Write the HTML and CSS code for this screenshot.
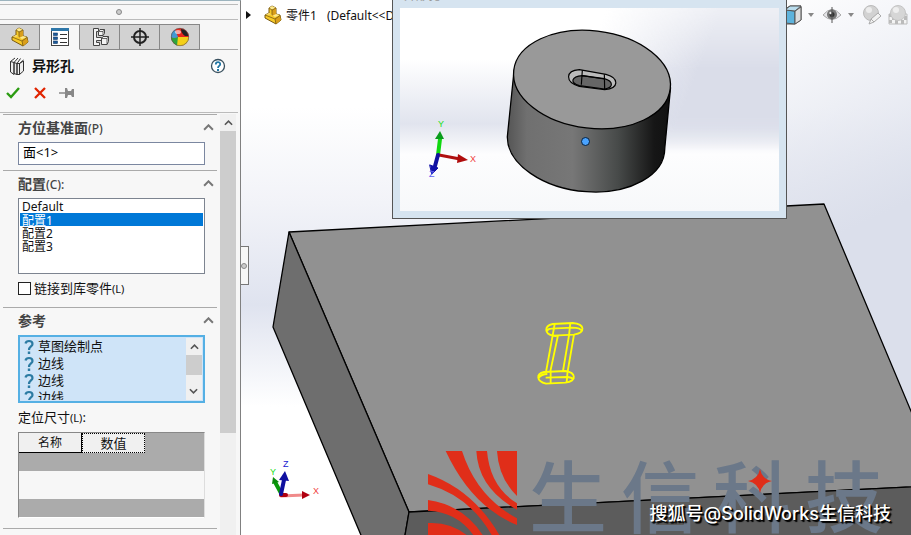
FILE: index.html
```html
<!DOCTYPE html>
<html lang="zh-CN">
<head>
<meta charset="utf-8">
<title>异形孔</title>
<link rel="stylesheet" href="styles.css">
</head>
<body>
<svg class="defs" aria-hidden="true">
  <symbol id="part" viewBox="0 0 20 20">
    <path d="M2 10 6 8 6 3 9 1 13 3 13 9 17 10 18 15 13 19 2 13Z" fill="#f6c928" stroke="#7a5a12" stroke-linejoin="round"/>
    <path d="M6 3 9 5 13 3 9 1ZM2 10 6 8 12 12 17 10 13 9 9 9" fill="#fde98c"/>
    <path d="M9 5 13 3V9L9 11ZM12 13 17 11 18 15 13 19Z" fill="#d99e1a"/>
    <path d="M6 3 9 5V10M9 5 13 3M2 10 12 14 17 10.500M12 14 13 19" fill="none" stroke="#7a5a12" stroke-width=".8"/>
  </symbol>
  <symbol id="chevron" viewBox="0 0 10 6"><path d="M1 5 5 1 9 5" fill="none" stroke="currentColor" stroke-width="1.800"/></symbol>
  <symbol id="query" viewBox="0 0 10 16"><path d="M1.500 4.500C2 2.500 3.500 2 5 2 7 2 8.500 3 8.500 5 8.500 7.500 5 7.500 5 11" fill="none" stroke="#2c7ba3" stroke-width="2.200"/><rect x="3.800" y="12.500" width="2.400" height="2.500" fill="#2c7ba3"/></symbol>
</svg>
<div class="app">
  <aside class="panel">
    <div class="grip"><span class="dot"></span></div>
    <nav class="tabs" aria-label="管理器">
      <button class="tab" aria-label="特征"><svg width="20" height="20"><use href="#part"/></svg></button>
      <button class="tab active" aria-label="属性"><svg width="20" height="20" viewBox="0 0 20 20"><rect x="1.500" y="1.500" width="17" height="17" fill="#fff" stroke="#444"/><rect x="1" y="1" width="18" height="3" fill="#2d76a8"/><g fill="#1d5b9c" stroke="#123a66" stroke-width=".6"><rect x="3.500" y="6" width="4" height="2.500"/><rect x="3.500" y="10" width="4" height="2.500"/><rect x="3.500" y="14" width="4" height="2.500"/></g><path d="M10 7.500H17M10 11.500H17M10 15.500H17" stroke="#333"/></svg></button>
      <button class="tab" aria-label="配置"><svg width="20" height="20" viewBox="0 0 20 20" fill="#f2f2f2" stroke="#444"><path d="M3.500 1.500H8.500V4.500H6.500V10.500H11.500V13.500H6.500V15.500H9.500V18.500H3.500Z"/><path d="M8.500 4.500 10 2.500H14.500V6.500L13 8.500H8.500ZM11.500 11.500 13 9.500H18.500V14.500L17 17.500H11.500Z"/><path d="M8.500 4.500H13V8.500M13 4.500 14.500 2.500M11.500 11.500H17V17.500M17 11.500 18.500 9.500" fill="none" stroke-width=".8"/></svg></button>
      <button class="tab" aria-label="尺寸"><svg width="20" height="20" viewBox="0 0 20 20" fill="none" stroke="#222" stroke-width="2"><circle cx="10" cy="10" r="6"/><path d="M10 1V19M1 10H19" stroke-width="1.500"/></svg></button>
      <button class="tab" aria-label="外观"><svg width="20" height="20" viewBox="0 0 20 20"><circle cx="10" cy="10" r="9" fill="#e8261c"/><path d="M1 10C3 11 6 11 8 10L10 19A9 9 0 0 1 1 10" fill="#2fa43b"/><path d="M8 10 16 10 19 10A9 9 0 0 1 7 18.500Z" fill="#f4cf18"/><path d="M1 10A9 9 0 0 1 5 2.500L8 10Q4 12 1 10" fill="#4299d2"/><path d="M11 2Q17 2 18.500 9L15 9Q11 6 11 2" fill="#222"/><ellipse cx="8" cy="5" rx="3" ry="2" fill="#fff" opacity=".6"/><circle cx="10" cy="10" r="8.700" fill="none" stroke="#555" stroke-width=".6"/></svg></button>
    </nav>
    <header class="title">
      <svg width="16" height="20" viewBox="0 0 16 20" fill="#eee" stroke="#333"><path d="M1.500 5.500 5 6.500V18.500L1.500 16ZM5 6.500 8 7.500V18.500L5 17.500ZM8 7.500 10.500 7.500V18.500H8ZM10.500 7.500 14.500 5V15L10.500 18.500Z"/><path d="M1.500 5.500 6 2M5 6.500 9 2M8 7.500 11.500 2.500M10.500 7.500 14.500 4" fill="none"/></svg>
      <h1>异形孔</h1>
      <button class="help" aria-label="帮助"><svg width="16" height="16" viewBox="0 0 16 16"><circle cx="8" cy="8" r="6.500" fill="#fff" stroke="#39505e" stroke-width="1.300"/><path d="M5.800 6.500C5.800 3.300 10.300 3.500 10.200 6.200 10.200 8 8 7.800 8 10" fill="none" stroke="#2277a5" stroke-width="1.800"/><rect x="7" y="11" width="2" height="2" fill="#2277a5"/></svg></button>
    </header>
    <div class="actions">
      <button aria-label="确定"><svg width="16" height="14" viewBox="0 0 16 14"><path d="M2 7 6 11 14 2" fill="none" stroke="#2c9c12" stroke-width="2.400"/></svg></button>
      <button aria-label="取消"><svg width="14" height="14" viewBox="0 0 14 14"><path d="M2 2 12 12M12 2 2 12" stroke="#e02400" stroke-width="2.300"/></svg></button>
      <button aria-label="固定"><svg width="16" height="14" viewBox="0 0 16 14"><path d="M0 7H7" stroke="#888" stroke-width="1.500"/><path d="M6 2H8L9 5H12L13 3H15V11H13L12 9H9L8 12H6Z" fill="#888"/></svg></button>
    </div>
    <div class="body">
      <div class="groups">
        <section>
          <h2><label for="face">方位基准面<small>(P)</small></label><svg width="11" height="7"><use href="#chevron"/></svg></h2>
          <input id="face" class="face" type="text" value="面&lt;1&gt;">
        </section>
        <section>
          <h2><label for="config">配置<small>(C):</small></label><svg width="11" height="7"><use href="#chevron"/></svg></h2>
          <select id="config" class="config" size="5">
            <option>Default</option><option selected>配置1</option><option>配置2</option><option>配置3</option>
          </select>
          <label class="check"><input type="checkbox"><span>链接到库零件<small>(L)</small></span></label>
        </section>
        <section>
          <h2><span>参考</span><svg width="11" height="7"><use href="#chevron"/></svg></h2>
          <div class="refs">
            <ul>
              <li><svg width="10" height="16"><use href="#query"/></svg>草图绘制点</li>
              <li><svg width="10" height="16"><use href="#query"/></svg>边线</li>
              <li><svg width="10" height="16"><use href="#query"/></svg>边线</li>
              <li><svg width="10" height="16"><use href="#query"/></svg>边线</li>
            </ul>
            <div class="scroll"><button aria-label="向上"><svg width="9" height="6"><use href="#chevron"/></svg></button><i class="thumb short"></i><button class="down" aria-label="向下"><svg width="9" height="6"><use href="#chevron"/></svg></button></div>
          </div>
          <p class="caption" id="dims">定位尺寸<small>(L)</small>:</p>
          <table class="dims" aria-labelledby="dims">
            <thead><tr><th class="name">名称</th><th class="value">数值</th><td></td></tr></thead>
            <tbody><tr class="gap"><td colspan="3"></td></tr><tr class="blank"><td colspan="3"></td></tr><tr class="gap"><td colspan="3"></td></tr></tbody>
          </table>
        </section>
        <section></section>
      </div>
      <div class="scroll main"><button aria-label="向上"><svg width="9" height="6"><use href="#chevron"/></svg></button><i class="thumb long"></i></div>
    </div>
  </aside>
  <main class="view">
    <svg class="scene" viewBox="241 0 670 535" preserveAspectRatio="xMinYMin slice">
      <defs>
        <linearGradient id="sky" x1="0" y1="0" x2="0" y2="1"><stop offset=".2" stop-color="#fff"/><stop offset=".38" stop-color="#f2f3f8"/><stop offset=".57" stop-color="#dfe3ef"/><stop offset=".76" stop-color="#fff"/></linearGradient>
        <linearGradient id="haze" gradientUnits="userSpaceOnUse" x1="740" y1="0" x2="850" y2="230"><stop offset="0" stop-color="#e0e3ee" stop-opacity="0"/><stop offset="1" stop-color="#dbdfeb"/></linearGradient>
      </defs>
      <rect x="241" width="670" height="535" fill="url(#sky)"/>
      <rect x="600" width="311" height="535" fill="url(#haze)"/>
      <g stroke="#000" stroke-width="1.300" stroke-linejoin="round">
        <path d="M289 232 824 204 950 504 950 485 409 512Z" fill="#919191"/>
        <path d="M289 232 273 327 366 547 403 547 409 512Z" fill="#6e6e6e"/>
        <path d="M409 512 950 485V547H403Z" fill="#5c5c5c"/>
      </g>
      <g transform="translate(500 300) scale(.33333)" fill="none" stroke="#ff0" stroke-width="5.500">
        <path d="M158 72 218 69C255 72 258 98 222 104L160 107C132 102 132 78 158 72ZM154 86 216 83C236 83 244 88 246 94M154 86Q143 86 141 94"/>
        <path d="M132 216 196 213C228 218 232 242 196 248L138 251C108 243 108 222 132 216ZM116 234Q124 222 142 222M137 233 203 231Q219 234 222 238"/>
        <path d="M164 72 158 106 138 216M174 106 151 214M211 70 207 106 189 213M222 104 203 214M152 212V250M203 212 200 247M158 106 170 109"/>
      </g>
      <g transform="translate(260 440) scale(.33333)" fill="#e02e19">
        <path d="M711 33H771V168Q716 115 711 33ZM649 33H681Q690 140 771 190V209Q655 145 649 33ZM557 33H606Q650 170 771 235V255Q635 200 557 33ZM504 102Q640 150 718 285H695Q630 170 504 133ZM504 180Q610 195 668 285H640Q590 215 504 212ZM504 249Q570 245 620 285H504Z"/>
      </g>
      <g stroke-linecap="round">
        <path d="M282 495 275 482" stroke="#0a9a0a" stroke-width="4"/><path d="M272 484 273 477 279 482Z" fill="#0b8a0b"/>
        <path d="M281 496 304 495" stroke="#f08a8a" stroke-width="3"/><path d="M302 491 310 495 302 499Z" fill="#b00010"/><path d="M281 495H286" stroke="#b00010" stroke-width="4"/>
        <path d="M281 494 284 480" stroke="#1010a0" stroke-width="4"/><path d="M279 480 285 471 289 481Z" fill="#1010a0"/>
      </g>
      <g class="axis"><text x="270" y="475" fill="#20e020">Y</text><text x="283" y="467" fill="#2020d0">Z</text><text x="313" y="494" fill="#f04040">X</text></g>
    </svg>
    <div class="topbar">
      <div class="tree"><svg width="5" height="10" viewBox="0 0 5 10"><path d="M0 1 5 5 0 9Z" fill="#111"/></svg><svg width="20" height="20"><use href="#part"/></svg><span>零件1</span><span>(Default&lt;&lt;D</span></div>
      <div class="tools">
        <svg width="18" height="20" viewBox="0 0 18 20" stroke="#555" stroke-linejoin="round"><path d="M1 4 6 1H17V15L11 19H1Z" fill="#fff"/><path d="M1 5 11 6V19L1 18Z" fill="#5eb3dc"/><path d="M11 6 17 2V15L11 19Z" fill="#ddd"/><path d="M1 5 6 1H17L11 6Z" fill="#b9dced"/></svg>
        <svg class="caret" width="6" height="4"><path d="M0 0H6L3 4Z" fill="#888"/></svg>
        <svg width="20" height="16" viewBox="0 0 20 16"><path d="M1 8Q10-3 19 8 10 17 1 8Z" fill="#e5e5e8" stroke="#aaa"/><circle cx="10" cy="7.500" r="5" fill="#777"/><circle cx="10" cy="7.500" r="2.500" fill="#333"/><circle cx="8.500" cy="6" r="1.200" fill="#eee"/><path d="M10 0V16" stroke="#555"/></svg>
        <svg class="caret" width="6" height="4"><path d="M0 0H6L3 4Z" fill="#888"/></svg>
        <svg width="20" height="20" viewBox="0 0 20 20"><circle cx="9" cy="8" r="7.500" fill="#d2d2d2" stroke="#bbb"/><circle cx="7" cy="5" r="3" fill="#ececec"/><path d="M7 19 9 14 16 8 19 11 12 17Z" fill="#f2f2f2" stroke="#aaa"/><path d="M9 14 12 17" stroke="#aaa"/></svg>
        <svg width="20" height="20" viewBox="0 0 20 20"><path d="M1 9H19V19H1Z" fill="#f4f4f4" stroke="#bbb"/><path d="M1 9H4V12H1ZM4 12H7V15H4ZM1 15H4V18H1ZM7 15H10V19H7ZM10 12H13V15H10ZM13 15H16V19H13ZM16 11H19V15H16Z" fill="#bbb"/><circle cx="10" cy="8" r="7.500" fill="#d6d6d6" stroke="#c4c4c4"/><circle cx="8" cy="5" r="3" fill="#eee"/></svg>
      </div>
    </div>
    <div class="preview">
      <span class="preview-title">异形孔.SLDLFP</span>
      <svg viewBox="400 8 379 203" preserveAspectRatio="xMidYMid slice">
        <defs>
          <linearGradient id="pbg" x1="0" y1="0" x2="0" y2="1"><stop offset=".25" stop-color="#fff"/><stop offset=".57" stop-color="#e1e4ee"/><stop offset=".72" stop-color="#fdfdfe"/><stop offset="1" stop-color="#f7f8fa"/></linearGradient>
          <linearGradient id="pdark" gradientUnits="userSpaceOnUse" x1="610" y1="0" x2="710" y2="40"><stop offset="0" stop-color="#dadde9" stop-opacity="0"/><stop offset="1" stop-color="#dadde9"/></linearGradient>
          <linearGradient id="pfade" x1="0" y1="0" x2="0" y2="1"><stop offset="0" stop-color="#777"/><stop offset=".3" stop-color="#fff"/><stop offset=".54" stop-color="#fff"/><stop offset=".7" stop-color="#000"/></linearGradient>
          <mask id="upper" maskUnits="userSpaceOnUse" x="400" y="8" width="379" height="203"><rect x="400" y="8" width="379" height="203" fill="url(#pfade)"/></mask>
          <linearGradient id="side"><stop offset="0" stop-color="#555"/><stop offset=".12" stop-color="#707070"/><stop offset=".4" stop-color="#777"/><stop offset=".68" stop-color="#474a49"/><stop offset=".9" stop-color="#161616"/><stop offset="1" stop-color="#111"/></linearGradient>
        </defs>
        <rect x="400" y="8" width="379" height="203" fill="url(#pbg)"/>
        <rect x="600" y="8" width="179" height="203" fill="url(#pdark)" mask="url(#upper)"/>
        <path d="M513.800 73 507.300 137A78.800 48.800 6.700 0 0 664.800 148L670.500 88Z" fill="url(#side)" stroke="#000" stroke-width="1.300"/>
        <ellipse cx="592" cy="79.500" rx="78.800" ry="48.800" transform="rotate(6.700 592 79.500)" fill="#999" stroke="#000" stroke-width="1.300"/>
        <g transform="translate(490 0) scale(.33333)" stroke="#000" stroke-width="3.500" stroke-linejoin="round">
          <path d="M268 209 348 223C388 234 388 265 344 269L268 259C224 246 226 212 268 209Z" fill="#bbb"/>
          <path d="M277 227 343 236C370 244 372 262 344 267L268 257C238 248 244 230 277 227Z" fill="#666"/>
          <path d="M277 211 274 254M343 223 344 267M277 227 343 237" fill="none"/>
        </g>
        <circle cx="585.500" cy="141.500" r="4" fill="#4aa3ff" stroke="#06203c"/>
        <g stroke-linecap="round">
          <path d="M438 155 440 139" stroke="#10d810" stroke-width="4"/><path d="M435 139 440 131 444 139Z" fill="#0a9c1c"/>
          <path d="M439 155 460 159" stroke="#b01010" stroke-width="3"/><path d="M458 154 468 160 457 163Z" fill="#b00d0d"/>
          <path d="M438 155 435 166" stroke="#1010a0" stroke-width="4"/><path d="M430 165 438 168 432 174Z" fill="#1010a8" stroke="#1010a8"/>
        </g>
        <g class="axis"><text x="438" y="127" fill="#20e020">Y</text><text x="429" y="177" fill="#6060f0">Z</text><text x="470" y="162" fill="#f04040">X</text></g>
      </svg>
    </div>
    <button class="edge-grip" aria-label="折叠面板"><span class="dot"></span></button>
    <div class="brand"><span>生</span><span>信</span><span>科</span><span>技</span><svg width="24" height="24" viewBox="-12 -12 24 24"><path d="M0-12Q2-2 12 0 2 2 0 12-2 2-12 0-2-2 0-12Z" fill="#e02e19"/></svg></div>
    <p class="credit">搜狐号@SolidWorks生信科技</p>
  </main>
</div>
</body>
</html>
```
FILE: styles.css
```css
* { box-sizing: border-box; }
body { margin: 0; overflow: hidden; font: 13px/17px "Noto Sans", "Noto Sans CJK SC", sans-serif; color: #111; }
button { margin: 0; padding: 0; border: 0; background: none; color: inherit; display: flex; align-items: center; justify-content: center; }
svg { display: block; flex: none; }
small { font-size: 11px; }
.defs { display: none; }
.app { display: grid; grid-template-columns: 241px 1fr; height: 100vh; }
.panel { display: flex; flex-direction: column; min-height: 0; background: #f7f7f7; border-right: 1px solid #808080; border-top: 1px solid #9db4be; }
.grip { height: 16px; margin: 3px 2px 4px 0; border-top: 1px solid #bbb; border-bottom: 1px solid #bbb; display: flex; align-items: center; justify-content: center; }
.dot { width: 6px; height: 6px; border-radius: 50%; border: 1px solid #888; background: #ccc; }
.tabs { display: flex; height: 26px; margin-right: 2px; border-bottom: 1px solid #aaa; }
.tab { width: 40px; height: 26px; background: #d2d2d2; border: 1px solid #888; border-left: 0; }
.tab.active { background: #f7f7f7; border-bottom-color: #f7f7f7; border-top-color: #aaa; }
.title { display: flex; align-items: center; gap: 7px; height: 32px; padding: 0 14px 0 9px; }
h1 { margin: 0; font-size: 14px; line-height: 20px; }
.help { margin-left: auto; }
.actions { display: flex; gap: 12px; height: 31px; padding: 0 5px 8px; align-items: center; margin-right: 2px; border-bottom: 1px solid #bbb; }
.body { display: flex; flex: 1; min-height: 0; padding-top: 1px; }
.groups { flex: 1; min-width: 0; padding: 0 3px; overflow: hidden; }
section { border-top: 1px solid #aaa; padding: 0 12px 5px 15px; }
section:nth-child(3) { padding-bottom: 10px; }
h2 { display: flex; align-items: center; justify-content: space-between; margin: 0 -9px 0 0; height: 27px; padding-bottom: 2px; font-size: 14px; color: #444; }
h2 small { font-size: 12px; font-weight: 500; }
h2 svg { color: #777; }
.face { display: block; width: 100%; height: 23px; padding: 0 4px 4px; border: 1px solid #7b87a0; background: #fff; font: inherit; }
.config { display: block; width: 100%; height: 76px; padding: 1px; border: 1px solid #7d8490; border-radius: 0; background: #fff; font: inherit; font-size: 12px; overflow: hidden; outline: 0; }
.config option { display: flex; align-items: center; height: 13px; min-height: 13px; padding: 0 2px; line-height: 13px; color: #111; }
.config option:checked { background: #0078d7 linear-gradient(#0078d7, #0078d7); color: #fff; }
.check { display: flex; align-items: center; gap: 3px; height: 28px; }
.check input { appearance: none; width: 13px; height: 13px; margin: 0; border: 1px solid #222; background: #fff; }
.refs { display: flex; height: 68px; padding: 1px; border: 2px solid #55b0e4; background: #cfe4f8; }
.refs ul { flex: 1; margin: 0; padding: 0 3px; list-style: none; overflow: hidden; }
.refs li { display: flex; align-items: center; gap: 4px; height: 17px; }
.scroll { display: flex; flex-direction: column; width: 16px; background: #f0f0f0; color: #555; }
.scroll button { height: 17px; }
.scroll .down { margin-top: auto; transform: rotate(180deg); }
.thumb { background: #cdcdcd; }
.short { height: 20px; }
.long { height: 302px; }
.main { margin-right: 4px; }
.caption { margin: 0; padding: 6px 0; }
.dims { width: 100%; table-layout: fixed; border-spacing: 0; border: 1px solid #888; border-right-color: #ddd; border-bottom-color: #fff; background: #ababab; }
.dims th, .dims td { padding: 0; font-weight: 400; height: 20px; }
.dims .name { width: 63px; background: #f0f0f0; border-right: 1px solid #000; border-bottom: 1px solid #000; font-size: 12px; }
.dims .value { width: 63px; background: #f0f0f0; border: 1px dotted #000; }
.dims .gap td { height: 18px; }
.dims .blank td { height: 28px; background: #f7f7f7; }
.view { position: relative; overflow: hidden; }
.scene { position: absolute; inset: 0; width: 100%; height: 100%; }
.axis { font: 9px "Liberation Sans", sans-serif; }
.topbar { position: relative; display: flex; justify-content: space-between; padding: 5px 3px 0 5px; }
.tree { display: flex; align-items: center; font-size: 12px; height: 20px; }
.tree svg + svg { margin: 0 3px 0 12px; }
.tree span + span { margin-left: 10px; }
.tools { display: flex; align-items: center; gap: 6px; height: 20px; }
.tools .caret { margin-right: 2px; }
.preview { position: absolute; left: 151px; right: 124px; top: 0; height: 219px; padding: 8px 7px 7px; border: 1px solid #555; border-top: 0; background: #d6e4f0; }
.preview > svg { width: 100%; height: 100%; }
.preview-title { position: absolute; left: 11px; top: -12px; font-size: 12px; line-height: 16px; color: #999; }
.edge-grip { position: absolute; left: -1px; top: 246px; width: 9px; height: 39px; border: 1px solid #777; border-left: 0; background: #f7f7f7; }
.brand { position: absolute; right: 28px; bottom: 0; display: flex; gap: 14px; font-size: 78px; line-height: 76px; font-weight: 500; color: #6b7889; }
.brand svg { position: absolute; right: 111px; top: 10px; }
.credit { position: absolute; right: 20px; bottom: 9px; margin: 0; font: 500 18px/24px Inter, "Noto Sans CJK SC", sans-serif; color: #fff; text-shadow: 1px 1px 1px #000, 2px 2px 1px #000; white-space: nowrap; }
```
